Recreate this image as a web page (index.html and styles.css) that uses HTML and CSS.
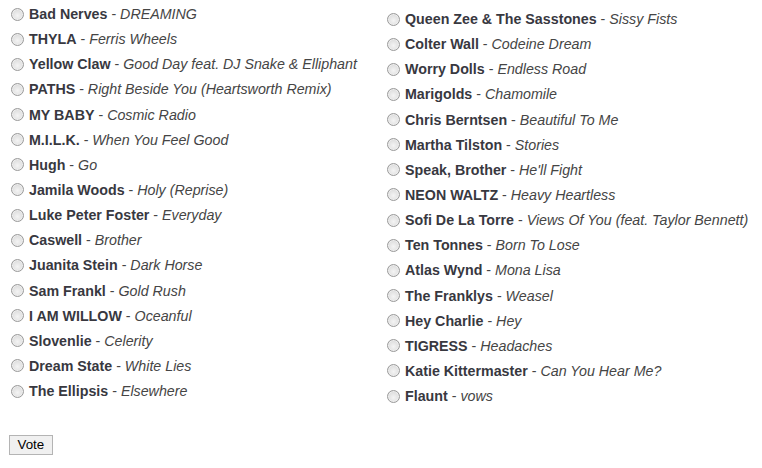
FILE: index.html
```html
<!DOCTYPE html>
<html lang="en">
<head>
<meta charset="utf-8">
<title>Vote</title>
<link rel="stylesheet" href="styles.css">
</head>
<body>
<form class="poll">
  <div class="choices">
    <ul class="col col-left">
      <li><label><input type="radio" name="song"><b>Bad Nerves</b> - <i>DREAMING</i></label></li>
      <li><label><input type="radio" name="song"><b>THYLA</b> - <i>Ferris Wheels</i></label></li>
      <li><label><input type="radio" name="song"><b>Yellow Claw</b> - <i>Good Day feat. DJ Snake &amp; Elliphant</i></label></li>
      <li><label><input type="radio" name="song"><b>PATHS</b> - <i>Right Beside You (Heartsworth Remix)</i></label></li>
      <li><label><input type="radio" name="song"><b>MY BABY</b> - <i>Cosmic Radio</i></label></li>
      <li><label><input type="radio" name="song"><b>M.I.L.K.</b> - <i>When You Feel Good</i></label></li>
      <li><label><input type="radio" name="song"><b>Hugh</b> - <i>Go</i></label></li>
      <li><label><input type="radio" name="song"><b>Jamila Woods</b> - <i>Holy (Reprise)</i></label></li>
      <li><label><input type="radio" name="song"><b>Luke Peter Foster</b> - <i>Everyday</i></label></li>
      <li><label><input type="radio" name="song"><b>Caswell</b> - <i>Brother</i></label></li>
      <li><label><input type="radio" name="song"><b>Juanita Stein</b> - <i>Dark Horse</i></label></li>
      <li><label><input type="radio" name="song"><b>Sam Frankl</b> - <i>Gold Rush</i></label></li>
      <li><label><input type="radio" name="song"><b>I AM WILLOW</b> - <i>Oceanful</i></label></li>
      <li><label><input type="radio" name="song"><b>Slovenlie</b> - <i>Celerity</i></label></li>
      <li><label><input type="radio" name="song"><b>Dream State</b> - <i>White Lies</i></label></li>
      <li><label><input type="radio" name="song"><b>The Ellipsis</b> - <i>Elsewhere</i></label></li>
    </ul>
    <ul class="col col-right">
      <li><label><input type="radio" name="song"><b>Queen Zee &amp; The Sasstones</b> - <i>Sissy Fists</i></label></li>
      <li><label><input type="radio" name="song"><b>Colter Wall</b> - <i>Codeine Dream</i></label></li>
      <li><label><input type="radio" name="song"><b>Worry Dolls</b> - <i>Endless Road</i></label></li>
      <li><label><input type="radio" name="song"><b>Marigolds</b> - <i>Chamomile</i></label></li>
      <li><label><input type="radio" name="song"><b>Chris Berntsen</b> - <i>Beautiful To Me</i></label></li>
      <li><label><input type="radio" name="song"><b>Martha Tilston</b> - <i>Stories</i></label></li>
      <li><label><input type="radio" name="song"><b>Speak, Brother</b> - <i>He'll Fight</i></label></li>
      <li><label><input type="radio" name="song"><b>NEON WALTZ</b> - <i>Heavy Heartless</i></label></li>
      <li><label><input type="radio" name="song"><b>Sofi De La Torre</b> - <i>Views Of You (feat. Taylor Bennett)</i></label></li>
      <li><label><input type="radio" name="song"><b>Ten Tonnes</b> - <i>Born To Lose</i></label></li>
      <li><label><input type="radio" name="song"><b>Atlas Wynd</b> - <i>Mona Lisa</i></label></li>
      <li><label><input type="radio" name="song"><b>The Franklys</b> - <i>Weasel</i></label></li>
      <li><label><input type="radio" name="song"><b>Hey Charlie</b> - <i>Hey</i></label></li>
      <li><label><input type="radio" name="song"><b>TIGRESS</b> - <i>Headaches</i></label></li>
      <li><label><input type="radio" name="song"><b>Katie Kittermaster</b> - <i>Can You Hear Me?</i></label></li>
      <li><label><input type="radio" name="song"><b>Flaunt</b> - <i>vows</i></label></li>
    </ul>
  </div>
  <div class="actions">
    <button type="button" class="vote-btn">Vote</button>
  </div>
</form>
</body>
</html>
```

FILE: styles.css
```css
html, body {
  margin: 0;
  padding: 0;
  background: #fff;
}

body {
  font-family: "Liberation Sans", Arial, sans-serif;
  font-size: 14.25px;
  color: #454545;
}

.poll {
  padding: 1.5px 0 0 11px;
}

.choices {
  display: flex;
  align-items: flex-start;
}

.col {
  list-style: none;
  margin: 0;
  padding: 0;
}

.col-left {
  width: 376px;
}

.col-right {
  padding-top: 5px;
}

.col li {
  height: 25.15px;
  white-space: nowrap;
}

.col label {
  display: flex;
  align-items: center;
  height: 25px;
  white-space: pre;
}

.col b {
  font-weight: bold;
  color: #38383f;
}

.col i {
  font-style: italic;
}

/* gray gradient radio button */
.col input[type="radio"] {
  appearance: none;
  -webkit-appearance: none;
  width: 13px;
  height: 13px;
  margin: 0 5px 0 0;
  border-radius: 50%;
  border: 1px solid #9a9a9a;
  background: radial-gradient(circle at 50% 60%, #f4f4f4 0, #e2e2e2 55%, #c8c8c8 100%);
  box-shadow: inset 0 0 0 1px #eee;
  flex: none;
  box-sizing: border-box;
}

.actions {
  padding: 26px 0 0 0;
  margin-left: -2px;
}

.vote-btn {
  font-family: "Liberation Sans", Arial, sans-serif;
  font-size: 13.33px;
  color: #000;
  background: #f0f0f0;
  border: 1px solid #b4b4b4;
  border-radius: 0;
  height: 20px;
  padding: 0 7.5px;
  line-height: 18px;
}
```
